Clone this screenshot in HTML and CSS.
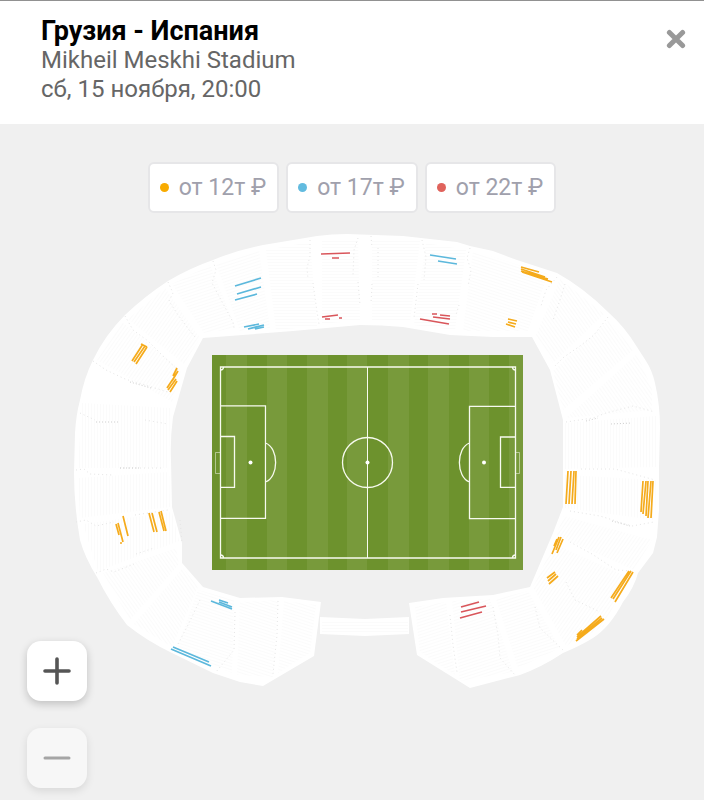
FILE: index.html
```html
<!DOCTYPE html>
<html lang="ru">
<head>
<meta charset="utf-8">
<meta name="viewport" content="width=device-width, initial-scale=1">
<title>Грузия - Испания</title>
<link rel="stylesheet" href="styles.css">
</head>
<body>
<header class="header">
  <div class="event">
    <h1 class="event-title">Грузия - Испания</h1>
    <p class="event-line">Mikheil Meskhi Stadium</p>
    <p class="event-line">сб, 15 ноября, 20:00</p>
  </div>
  <button class="close" type="button" aria-label="Закрыть">
    <svg viewBox="0 0 20 20" width="20" height="20" aria-hidden="true"><path d="M3.400 3.400 16.600 16.600M16.600 3.400 3.400 16.600" stroke="#999" stroke-width="5" stroke-linecap="round"/></svg>
  </button>
</header>

<main class="hall">
  <div class="prices">
    <button class="price" type="button"><span class="dot dot-orange"></span>от 12т ₽</button>
    <button class="price" type="button"><span class="dot dot-blue"></span>от 17т ₽</button>
    <button class="price" type="button"><span class="dot dot-red"></span>от 22т ₽</button>
  </div>

  <svg class="map" viewBox="0 220 704 480" role="img" aria-label="Mikheil Meskhi Stadium">
    <defs>
      <pattern id="rows" width="8" height="3" patternUnits="userSpaceOnUse"><path class="row" d="M0 1.500H8"/></pattern>
      <pattern id="rows-v" width="3" height="8" patternUnits="userSpaceOnUse"><path class="row" d="M1.500 0V8"/></pattern>
      <pattern id="rows-up" width="8" height="3" patternUnits="userSpaceOnUse" patternTransform="rotate(-18)"><path class="row" d="M0 1.500H8"/></pattern>
      <pattern id="rows-down" width="8" height="3" patternUnits="userSpaceOnUse" patternTransform="rotate(18)"><path class="row" d="M0 1.500H8"/></pattern>
      <pattern id="rows-steep-up" width="8" height="3" patternUnits="userSpaceOnUse" patternTransform="rotate(-55)"><path class="row" d="M0 1.500H8"/></pattern>
      <pattern id="rows-steep-down" width="8" height="3" patternUnits="userSpaceOnUse" patternTransform="rotate(55)"><path class="row" d="M0 1.500H8"/></pattern>
    </defs>

    <!-- stands -->
    <path fill="#fff" d="M74 473 75 433Q76 415 80 400 84 378 93 360 105 335 125 315 145 296 168 281 190 268 213 260 237 250 263 245L317 236Q332 234 347 234L403 236 457 242 470 246 493 251 517 260 557 273Q584 288 608 312 625 327 637 347L646 361Q652 370 655 383 660 405 660 427L659 467 659 510 657 537 653 553 638 573Q634 588 623 602 610 627 593 638 580 646 563 653 542 667 520 675L470 688 417 655 409 603 443 598 493 595 530 587 553 533 563 507 563 420 550 370 532 337 493 337 450 335 403 327Q382 325 360 325L293 331 203 338 187 368 173 417Q170 440 171 460L172 507 182 543 182 563 203 587 240 598 282 597 321 602 314 656 263 686 240 682 213 673 172 653Q147 641 127 625 110 603 97 577 85 558 80 540 74 505 74 473Z"/>
    <path fill="#fff" d="M320 617 365 619 409 617V634L365 636 320 634Z"/>

    <!-- seat rows -->
    <path fill="url(#rows)" d="M266 250 310 242 317 326 276 330ZM322 241 358 239 360 320 322 324ZM372 239 420 241 410 322 372 320ZM426 243 466 250 455 330 414 325ZM322 620H408V633H322Z"/>
    <path fill="url(#rows-up)" d="M172 284 210 265 236 328 204 333ZM216 264 259 250 270 328 240 331ZM415 607 446 602 455 675 420 652ZM452 601 490 599 513 672 460 681ZM496 599 528 591 560 648 518 668Z"/>
    <path fill="url(#rows-down)" d="M473 251 548 274 528 331 463 331ZM198 590 234 600 232 673 176 650ZM240 602 278 600 273 677 237 675ZM284 601 316 605 310 653 278 673Z"/>
    <path fill="url(#rows-steep-up)" d="M165 288 200 338 184 364 128 319ZM122 322 181 370 172 402 97 360ZM556 535 564 516 652 540 634 570ZM533 587 554 544 628 577 603 627 566 646Z"/>
    <path fill="url(#rows-steep-down)" d="M560 279 604 314 553 363 536 335ZM609 320 633 350 563 410 553 371ZM637 354 652 389 652 410 566 418ZM103 573 176 548 179 564 130 620ZM134 624 183 568 198 587 172 647Z"/>
    <path fill="url(#rows-v)" d="M82 403 170 408 169 468 78 468ZM78 478 169 472 170 507 80 518ZM565 423 656 416 656 467 565 469ZM565 475 656 480 655 520 565 508ZM83 524 172 512 179 541 98 571Z"/>

    <!-- aisles -->
    <g class="aisle">
      <path d="M168 282 173 293 169 301 178 315 190 331 195 337M213 261 216 270 212 283 221 300 233 322 234 328M310 240V256L307 268 308 279M313 283 317 312 319 324M358 238 354 250 353 275M358 282 360 305M371 236 372 248M378 248V278M372 284 371 304M422 240 426 257 424 280M418 284 414 318M470 248 467 258 471 270 468 286M459 305 456 315"/>
      <path d="M557 277 546 290 541 306M565 284 560 300 553 320M608 317 594 335 580 346 564 357 555 366M125 316 133 330 148 341 162 355 178 370M93 361 106 370 125 379 145 385 168 392M80 413 95 420M145 420 168 424M566 422 593 418 606 413 633 406 655 412"/>
      <path d="M76 470 84 469 90 474 112 475M120 468 164 468M76 522 86 520 96 526 114 522M135 515 168 510M96 573 106 569 114 572 134 564M136 554 154 548M200 600 188 625 178 644M235 612 234 650 216 672M278 601 277 635 273 674M180 520 182 543"/>
      <path d="M581 469 615 469 655 480M570 511 600 516 632 526 654 522M570 542 592 554 616 570 634 571M566 582 575 600 600 612M450 615 453 645 457 672M493 607 498 635 500 658 515 675M535 607 540 628 563 650"/>
    </g>
    <g class="aisle aisle-strong">
      <path d="M96 422H118M130 382 151 388M120 468H140M586 421 598 418M611 424 632 423M612 521 630 526"/>
    </g>

    <!-- seats on sale -->
    <g class="seats orange">
      <path d="M132 361 143 344M134 362 145 346M136 364 147 347M141 344 147 347"/>
      <path d="M173 376 177 368M174 377 176 374M172 381 178 371M167 388 175 376M168 390 176 379M170 392 177 381"/>
      <path d="M521 267 539 272M521 269 545 277M521 271 548 279M522 272 552 282"/>
      <path d="M508 319 517 321M508 322 516 324M506 324 515 327"/>
      <path d="M568 471 566 504M571 471 569 504M574 471 572 504M576 471 575 504"/>
      <path d="M643 481 641 512M646 481 643 514M648 481 646 516M651 481 648 518M653 481 651 518"/>
      <path d="M559 537 552 554M561 537 556 550M563 539 557 553M554 546 557 539"/>
      <path d="M547 578 555 572M548 581 556 574M549 584 558 576"/>
      <path d="M629 571 611 598M631 571 613 599M633 572 615 602"/>
      <path d="M577 635 582 630M577 637 601 616M577 639 602 618M576 641 604 619"/>
      <path d="M116 524 119 535M118 523 123 542M120 543 122 543M123 516 128 536"/>
      <path d="M149 513 154 532M152 513 157 532M159 512 164 531M161 511 166 531"/>
    </g>
    <g class="seats blue">
      <path d="M235 286 261 278M237 294 261 287M235 300 257 294"/>
      <path d="M244 327 259 324M248 329 264 325M255 329 264 327"/>
      <path d="M430 255 456 259M438 261 457 264"/>
      <path d="M211 601 232 609M219 600 228 603M219 602 232 607"/>
      <path d="M173 647 209 662M171 649 211 666"/>
    </g>
    <g class="seats red">
      <path d="M321 254 350 253M332 258H339M322 317 338 315M325 319H330M339 318H342"/>
      <path d="M420 319 449 324M432 314H437M433 317 450 319M440 315 450 316"/>
      <path d="M461 607 479 602M461 612 486 606M460 618 482 612"/>
    </g>

    <!-- pitch -->
    <path fill="#6d922d" d="M212 355H523V570H212Z"/>
    <path fill="#789a3b" d="M226 355H247V570H226ZM267 355H287V570H267ZM307 355H328V570H307ZM347 355H367V570H347ZM388 355H409V570H388ZM428 355H449V570H428ZM469 355H489V570H469ZM509 355H523V570H509Z"/>
    <g class="marking">
      <path d="M220.500 367H515.500V558H220.500Z"/>
      <path d="M367.500 367V558" stroke-width="1"/>
      <circle cx="367.500" cy="462.500" r="25"/>
      <path d="M220.500 405.800H265.500V518.300H220.500M220.500 436.500H234.500V487.300H220.500M265.500 443C279 448 279 477 265.500 482"/>
      <path d="M515.500 406.300H469.500V518.700H515.500M515.500 437H500.500V487.300H515.500M469.500 443C456 448 456 477 469.500 482"/>
      <path d="M220.500 370A3 3 0 0 0 223.500 367M512.500 367A3 3 0 0 0 515.500 370M220.500 555A3 3 0 0 1 223.500 558M512.500 558A3 3 0 0 1 515.500 555"/>
      <path d="M220 452.500H215.500V473.500H220M516 452.500H519.500V473.500H516" stroke-width="1" opacity=".5"/>
    </g>
    <g fill="#fff"><circle cx="250.500" cy="462.500" r="2"/><circle cx="367.500" cy="462.500" r="2"/><circle cx="484" cy="462.500" r="2"/></g>
  </svg>

  <div class="zoom">
    <button class="zoom-button" type="button" aria-label="Приблизить">
      <svg viewBox="0 0 28 28" width="28" height="28" aria-hidden="true"><path d="M2 14H26M14 2V26" stroke="#555" stroke-width="3.600" stroke-linecap="round"/></svg>
    </button>
    <button class="zoom-button" type="button" aria-label="Отдалить" disabled>
      <svg viewBox="0 0 28 28" width="28" height="28" aria-hidden="true"><path d="M2 14H26" stroke="#a5a5a5" stroke-width="3" stroke-linecap="round"/></svg>
    </button>
  </div>
</main>
</body>
</html>
```
FILE: styles.css
```css
* {
  box-sizing: border-box;
}

body {
  margin: 0;
  min-height: 100vh;
  display: flex;
  flex-direction: column;
  background: #f0f0f0;
  font-family: Roboto, "Liberation Sans", sans-serif;
}

button {
  font: inherit;
  border: 0;
  padding: 0;
  cursor: pointer;
}

.header {
  display: flex;
  justify-content: space-between;
  align-items: flex-start;
  padding: 15px 18px 20px 41px;
  background: #fff;
  border-top: 1px solid #919191;
}

.event-title,
.event-line {
  margin: 0;
  font-size: 24px;
  line-height: 29px;
}

.event-title {
  color: #000;
  font-size: 27px;
  font-weight: 700;
  line-height: 30px;
}

.event-line {
  color: #666;
  font-weight: 400;
}

.close {
  display: flex;
  margin-top: 13px;
  background: none;
}

.hall {
  position: relative;
  flex: 1;
  padding-top: 38px;
}

.prices {
  display: flex;
  justify-content: center;
  gap: 7px;
}

.price {
  display: flex;
  align-items: center;
  height: 51px;
  padding: 0 11px 0 10px;
  border: 2px solid #e6e6e8;
  border-radius: 6px;
  background: #fff;
  color: #a0a0ac;
  font-size: 23px;
}

.dot {
  width: 9px;
  height: 9px;
  margin-right: 10px;
  border-radius: 50%;
}

.dot-orange {
  background: #f8ab00;
}

.dot-blue {
  background: #62bbdf;
}

.dot-red {
  background: #e0635c;
}

.map {
  display: block;
  width: 100%;
  margin-top: 7px;
  fill: none;
}

.row {
  stroke: #fbfbfb;
  stroke-width: 1;
}

.aisle {
  stroke: #e6e6e6;
  stroke-width: 1;
  stroke-dasharray: 1 3;
}

.aisle-strong {
  stroke: #cfcfcf;
  stroke-dasharray: 1 2;
}

.seats {
  stroke-width: 1.7;
}

.orange {
  stroke: #f5ab1c;
}

.blue {
  stroke: #5cb8dc;
}

.red {
  stroke: #d9565b;
}

.marking {
  stroke: #f7faef;
  stroke-width: 1.3;
}

.zoom {
  position: absolute;
  left: 27px;
  bottom: 12px;
  display: flex;
  flex-direction: column;
  gap: 27px;
}

.zoom-button {
  display: flex;
  align-items: center;
  justify-content: center;
  width: 60px;
  height: 60px;
  border-radius: 14px;
  background: #fff;
  box-shadow: 0 3px 8px rgba(0, 0, 0, 0.2);
}

.zoom-button:disabled {
  background: #f7f7f7;
  box-shadow: 0 3px 8px rgba(0, 0, 0, 0.1);
  cursor: default;
}
```
